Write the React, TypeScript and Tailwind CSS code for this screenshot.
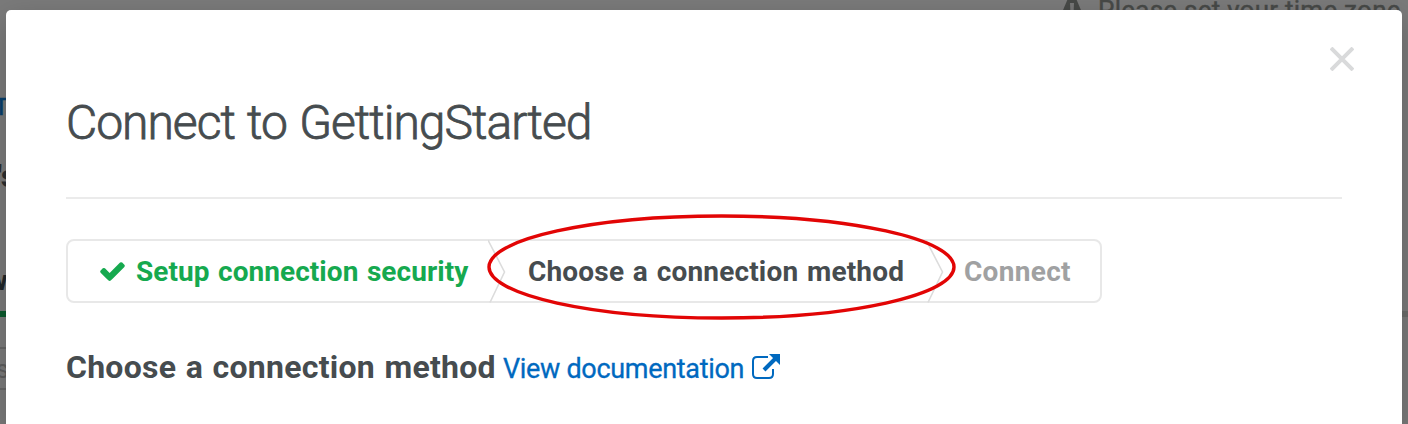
import React from "react";

function CheckIcon() {
  return (
    <svg className="mr-[11px] h-[19px] w-[25px] shrink-0" viewBox="121 326 1550 1196" fill="currentColor">
      <path d="M1671 566q0 40-28 68l-724 724-136 136q-28 28-68 28t-68-28l-136-136-362-362q-28-28-28-68t28-68l136-136q28-28 68-28t68 28l294 295 656-657q28-28 68-28t68 28l136 136q28 28 28 68z" />
    </svg>
  );
}

function Chevron() {
  return (
    <svg className="block h-16 w-5 shrink-0" viewBox="0 0 20 64" fill="none" stroke="#dcdcdc" strokeWidth="1.6">
      <path d="M0 1L16.500 33L2 63.500" />
    </svg>
  );
}

function Backdrop() {
  return (
    <div className="absolute inset-0 overflow-hidden bg-[#7a7a7a]" aria-hidden="true">
      <div className="absolute -top-[8px] left-[1058px] flex items-center gap-[10px] whitespace-nowrap text-[26px] leading-[36px] text-[#474947]">
        <svg className="h-7 w-7" viewBox="0 0 28 28">
          <path d="M11 0H17L28 26H0Z" fill="#474947" />
          <path d="M12 7H16L15.500 18H12.500ZM12.500 20H15.500V23H12.500Z" fill="#777" />
        </svg>
        <span className="pl-[2px] tracking-[0.25px] [-webkit-text-stroke:0.4px_#474947]">Please set your time zone</span>
      </div>
      <span className="absolute top-[93px] -left-[6px] text-[24px] leading-7 text-[#063e6b] [-webkit-text-stroke:0.7px_#063e6b]">T</span>
      <span className="absolute top-[158px] -left-[3px] text-[32px] leading-9 font-bold text-[#2b2e30]">'s</span>
      <span className="absolute top-[265px] -left-[13px] text-[28px] leading-8 font-bold text-[#202629]">w</span>
      <div className="absolute top-[311px] left-0 h-[6px] w-full bg-[#6b6c6a]" />
      <div className="absolute top-[311px] left-0 h-[6px] w-10 bg-[#0b5a2d]" />
      <div className="absolute top-[347px] left-0 h-[43px] w-10 border-y-2 border-[#666666]" />
      <span className="absolute top-[356px] -left-[4px] text-[25px] leading-7 text-[#5d5d5d]">s</span>
    </div>
  );
}

export default function App() {
  return (
    <div className="relative h-[424px] w-[1408px] overflow-hidden font-[Roboto,sans-serif]">
      <Backdrop />
      <main className="relative mx-[6px] mt-[10px] h-[420px] rounded-t-[5px] bg-white px-[60px] text-[#464c4f] shadow-[0_10px_30px_rgba(0,0,0,0.2)]">
        <button aria-label="Close" className="absolute top-[37px] right-[48px] block h-6 w-6">
          <svg className="block h-6 w-6" viewBox="0 0 24 24" stroke="#d9dadb" strokeWidth="4" fill="none">
            <path d="M1 1L23 23M23 1L1 23" />
          </svg>
        </button>
        <header className="flex h-[189px] items-start border-b-2 border-[#ebebeb] pt-[83px]">
          <h1 className="text-[48px] leading-[60px] font-light tracking-[-1px] [word-spacing:1.5px] whitespace-nowrap [-webkit-text-stroke:0.8px_#464c4f]">
            Connect to GettingStarted
          </h1>
        </header>
        <nav className="relative mt-10 flex h-16 w-[1036px] items-center rounded-lg border-2 border-[#e8e8e8] text-[28px] leading-8 font-bold whitespace-nowrap">
          <div className="flex w-[420px] items-center pl-[32px] text-[#16a94f]">
            <CheckIcon />
            <span className="pt-px tracking-[0.05px] [word-spacing:1.5px]">Setup connection security</span>
          </div>
          <Chevron />
          <span className="w-[418px] pt-px pl-5 tracking-[0.18px] [word-spacing:1.5px]">Choose a connection method</span>
          <Chevron />
          <span className="pt-px pl-[18px] tracking-[0.3px] text-[#a0a1a2]">Connect</span>
          <svg className="pointer-events-none absolute -top-[27px] left-[418px] h-[108px] w-[472px]" viewBox="0 0 472 108" fill="none">
            <ellipse cx="235.500" cy="53" rx="232.500" ry="51" stroke="#e20505" strokeWidth="3.400" />
          </svg>
        </nav>
        <div className="mt-[44px] flex h-10 items-center whitespace-nowrap">
          <h2 className="w-[437px] text-[32px] leading-10 font-bold tracking-[0.25px] [word-spacing:1.3px]">Choose a connection method</h2>
          <a className="flex items-center text-[#0069bf]">
            <span className="w-[248px] pt-[3px] text-[27px] leading-8 tracking-[-0.32px] [-webkit-text-stroke:0.3px_#0069bf]">View documentation</span>
            <svg className="h-7 w-[30px]" viewBox="0 0 30 28" fill="none">
              <path d="M17 4H6Q2 4 2 8V21Q2 25 6 25H18Q22 25 22 21V16" stroke="currentColor" strokeWidth="2" />
              <path d="M13 17L25 5" stroke="currentColor" strokeWidth="4" />
              <path d="M18 1H29V12Z" fill="currentColor" />
            </svg>
          </a>
        </div>
      </main>
    </div>
  );
}
